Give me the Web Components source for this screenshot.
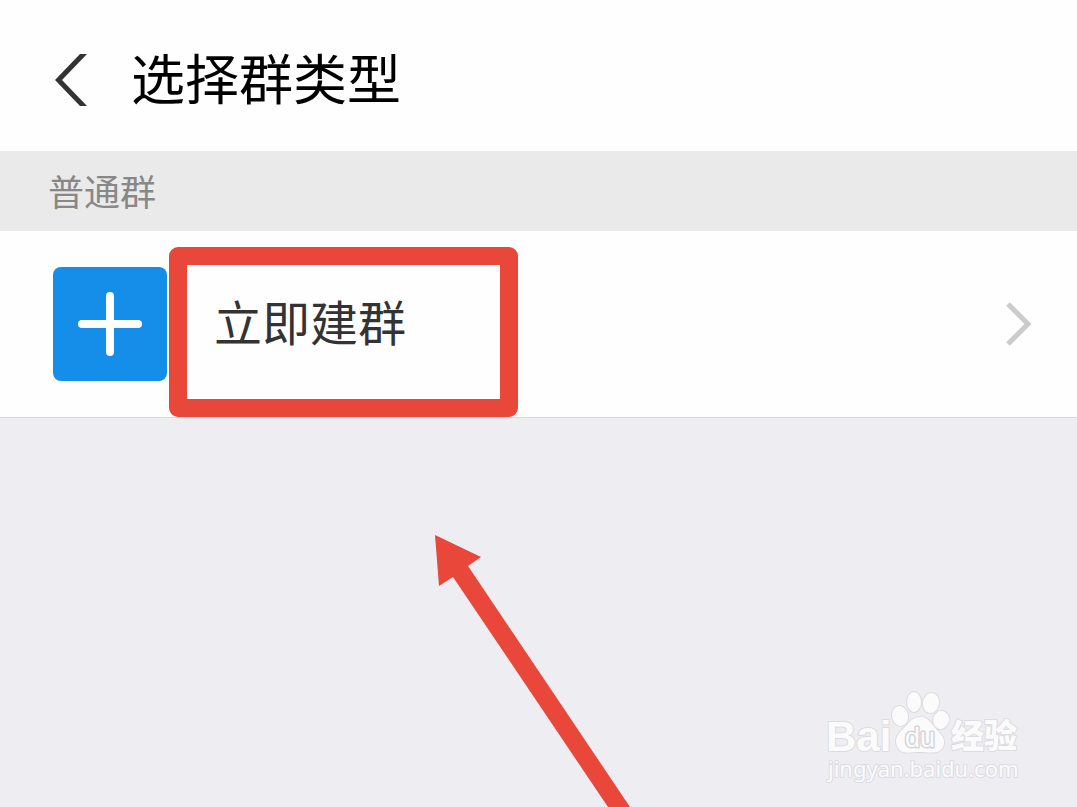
<!DOCTYPE html>
<html lang="zh-CN">
<head>
<meta charset="utf-8">
<meta name="viewport" content="width=device-width, initial-scale=1">
<title>选择群类型</title>
<style>
  body { margin: 0; font-family: "Noto Sans CJK SC", sans-serif; background: #eeedf2; }
</style>
</head>
<body>
<group-type-page>
  <nav-header slot="header">选择群类型</nav-header>
  <section-title slot="list">普通群</section-title>
  <list-row slot="list">立即建群</list-row>
  <pointer-arrow></pointer-arrow>
  <site-watermark></site-watermark>
</group-type-page>

<script>
const define = (name, html) => customElements.define(name, class extends HTMLElement {
  constructor() {
    super();
    const template = document.createElement('template');
    template.innerHTML = html;
    this.attachShadow({ mode: 'open' }).append(template.content.cloneNode(true));
  }
});

define('group-type-page', `
  <style>
    :host { display: flex; flex-direction: column; min-height: 100vh; background: #eeedf2; }
    main { flex: 1; display: flex; flex-direction: column; }
    .canvas { position: relative; flex: 1; display: flex; justify-content: flex-end; align-items: flex-end; overflow: hidden; }
  </style>
  <slot name="header"></slot>
  <main>
    <slot name="list"></slot>
    <div class="canvas"><slot></slot></div>
  </main>
`);

define('nav-header', `
  <style>
    :host { display: block; background: #fefefe; }
    header { display: flex; align-items: flex-start; gap: 35px; padding: 37px 48px 34px; }
    button { display: flex; padding: 17px 0 0; border: 0; background: none; cursor: pointer; }
    svg { display: block; width: 48px; height: 52px; }
    h1 { margin: 0; font-size: 54px; line-height: 80px; font-weight: 400; color: #000; }
  </style>
  <header>
    <button type="button" aria-label="返回">
      <svg viewBox="0 0 48 52"><path d="M32 0H39L14 26L39 52H32L7 26Z" fill="#333"/></svg>
    </button>
    <h1><slot></slot></h1>
  </header>
`);

define('section-title', `
  <style>
    :host { display: block; background: #eaeaea; }
    h2 { margin: 0; padding: 15px 48px 17px; font-size: 36px; line-height: 48px; font-weight: 400; color: #888; }
  </style>
  <h2><slot></slot></h2>
`);

define('list-row', `
  <style>
    :host { display: block; background: #fefefe; border-bottom: 1px solid #d9d9dc; }
    a { position: relative; display: flex; align-items: center; gap: 47px; padding: 36px 43px 36px 53px; color: #333; text-decoration: none; }
    .tile { display: block; width: 114px; height: 114px; border-radius: 8px; background: #148ee8; }
    .label { flex: 1; padding-bottom: 8px; font-size: 48px; line-height: 72px; }
    .chevron { display: block; width: 30px; height: 44px; }
    .highlight { position: absolute; left: 169px; top: 16px; bottom: 0; width: 349px; box-sizing: border-box; border: 18px solid #e84739; border-radius: 9px; pointer-events: none; }
  </style>
  <a href="#create">
    <svg class="tile" viewBox="0 0 114 114" aria-hidden="true"><path d="M57 29V85M29 57H85" stroke="#fff" stroke-width="8" stroke-linecap="round"/></svg>
    <span class="label"><slot></slot></span>
    <svg class="chevron" viewBox="0 0 30 44" aria-hidden="true"><path d="M4 2L24 22L4 42" fill="none" stroke="#cbcbcb" stroke-width="5"/></svg>
    <span class="highlight"></span>
  </a>
`);

define('pointer-arrow', `
  <style>
    :host { position: absolute; left: 434px; top: 116px; }
    svg { display: block; width: 200px; height: 276px; }
  </style>
  <svg viewBox="0 0 200 276" aria-hidden="true"><path d="M1 1L47 23L34 32L198 276H176L19 43L5 52Z" fill="#e84739"/></svg>
`);

define('site-watermark', `
  <style>
    :host { display: block; padding: 0 47px 17px 0; }
    svg { display: block; width: 210px; height: 105px; }
    text, .paw { fill: #fbfbfc; stroke: #dcdce0; stroke-width: 2px; paint-order: stroke; stroke-linejoin: round; }
    .latin { font: 700 42px "Liberation Sans", sans-serif; }
    .du { font: 400 27px "Liberation Sans", sans-serif; stroke: #d4d4d9; stroke-width: 3px; }
    .han { font: 900 33px "Noto Sans CJK SC", sans-serif; }
    .site { font: 400 22px "Noto Sans", sans-serif; }
  </style>
  <svg viewBox="0 0 210 105">
    <text class="latin" x="6" y="66">Bai</text>
    <g class="paw">
      <ellipse cx="80" cy="31" rx="8" ry="10" transform="rotate(-12 80 31)"/>
      <ellipse cx="94" cy="17" rx="7" ry="10"/>
      <ellipse cx="111" cy="18" rx="8" ry="10" transform="rotate(10 111 18)"/>
      <ellipse cx="121" cy="35" rx="8" ry="9" transform="rotate(15 121 35)"/>
      <path d="M100 32C91 32 88 40 81 46C75 52 75 58 78 63C82 70 91 67 100 67S119 70 123 62C126 56 123 51 118 46C111 39 109 32 100 32Z"/>
    </g>
    <text class="du" x="85" y="62">du</text>
    <text class="han" x="131" y="63">经验</text>
    <text class="site" x="8" y="92">jingyan.baidu.com</text>
  </svg>
`);
</script>
</body>
</html>
